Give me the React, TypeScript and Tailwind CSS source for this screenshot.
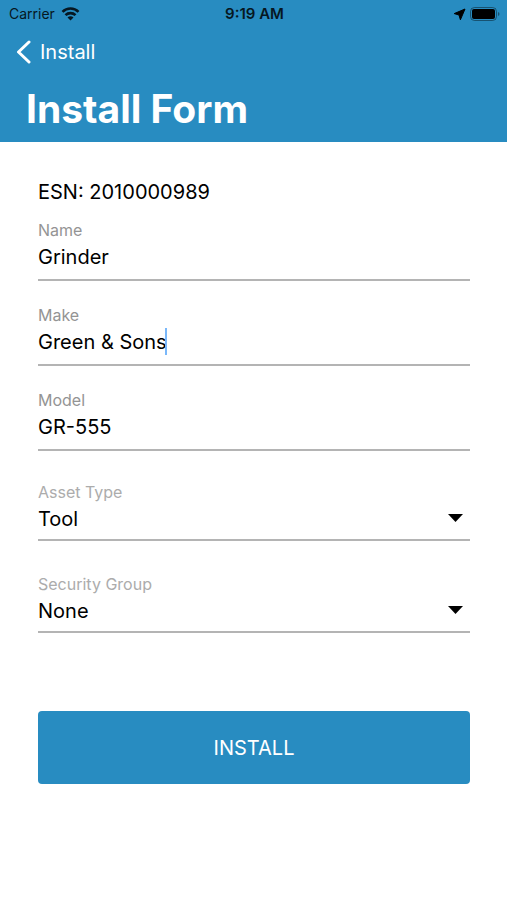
import { useState } from "react";

const ASSET_TYPES = ["Tool"];
const SECURITY_GROUPS = ["None"];

function StatusBar() {
  return (
    <div className="grid h-7 grid-cols-3 items-center pr-[7px] pl-[9px] text-sm text-[#061722]">
      <div className="flex items-center gap-1.5">
        <span>Carrier</span>
        <svg width="19" height="14" viewBox="0 0 18 14" fill="none" stroke="currentColor" strokeWidth="2.6">
          <path d="M1 4.800a11.3 11.3 0 0 1 16 0" />
          <path d="M4 8.200a7 7 0 0 1 10 0" />
          <path d="M9 13.500l-3-3.100a4.200 4.200 0 0 1 6 0z" fill="currentColor" stroke="none" />
        </svg>
      </div>
      <span className="text-center text-[15px] font-semibold">9:19 AM</span>
      <div className="flex items-center justify-end gap-1">
        <svg width="13" height="13" viewBox="0 0 13 13" fill="black" stroke="black" strokeLinejoin="round">
          <path d="M12 1 7.400 11.800 6 7 1.200 5.600z" />
        </svg>
        <svg width="30" height="14" viewBox="0 0 30 14">
          <rect x=".5" y=".5" width="26" height="13" rx="4" fill="none" stroke="currentColor" opacity=".5" />
          <rect x="2" y="2" width="23" height="10" rx="2" fill="black" />
          <path d="M28 5v4q1.500-.5 1.500-2T28 5" fill="currentColor" opacity=".5" />
        </svg>
      </div>
    </div>
  );
}

interface TextFieldProps {
  id: string;
  label: string;
  value: string;
  onChange: (value: string) => void;
  caret?: boolean;
}

function TextField({ id, label, value, onChange, caret }: TextFieldProps) {
  return (
    <div className="relative h-[62px] border-b-2 border-[#b4b4b4]">
      <label htmlFor={id} className="block text-base leading-[22px] text-[#949494]">
        {label}
      </label>
      <input
        id={id}
        value={value}
        onChange={(e) => onChange(e.target.value)}
        className="block h-8 w-full bg-transparent text-xl outline-none"
      />
      {/* text cursor, placed after the typed value */}
      {caret && (
        <span className="pointer-events-none absolute top-6 left-0 flex h-[27px] text-xl" aria-hidden="true">
          <span className="invisible whitespace-pre">{value}</span>
          <span className="-ml-0.5 w-0.5 bg-[#7ab8fa]" />
        </span>
      )}
    </div>
  );
}

interface SelectFieldProps {
  id: string;
  label: string;
  options: string[];
}

function SelectField({ id, label, options }: SelectFieldProps) {
  return (
    <div className="relative h-[60px] border-b-2 border-[#b4b4b4]">
      <label htmlFor={id} className="block text-base leading-[22px] text-[#acacac]">
        {label}
      </label>
      <select id={id} className="block h-8 w-full appearance-none bg-transparent text-xl outline-none">
        {options.map((o) => (
          <option key={o}>{o}</option>
        ))}
      </select>
      <svg
        className="pointer-events-none absolute top-[33px] right-[7px]"
        width="15"
        height="8"
        viewBox="0 0 15 8"
      >
        <path d="M0 0h15L7.500 8z" />
      </svg>
    </div>
  );
}

export default function App() {
  const [name, setName] = useState("Grinder");
  const [make, setMake] = useState("Green & Sons");
  const [model, setModel] = useState("GR-555");

  return (
    <div className="min-h-screen bg-white font-['Inter',sans-serif] text-black">
      <header className="bg-[#288cc1] pb-1.5">
        <StatusBar />
        <nav className="px-4 py-2">
          <button className="flex items-center gap-2 text-xl leading-8 text-white">
            <svg
              width="16"
              height="24"
              viewBox="0 0 16 24"
              fill="none"
              stroke="currentColor"
              strokeWidth="3"
              strokeLinecap="round"
              strokeLinejoin="round"
            >
              <path d="M13 2 2.500 12 13 22" />
            </svg>
            Install
          </button>
        </nav>
        <h1 className="px-[26px] pt-1.5 text-[39px] leading-[54px] font-bold text-white">Install Form</h1>
      </header>

      <form className="pt-9 pr-[37px] pl-[38px]" onSubmit={(e) => e.preventDefault()}>
        <p className="mb-[13px] text-xl leading-7">ESN: 2010000989</p>
        <div className="space-y-[23px]">
          <TextField id="name" label="Name" value={name} onChange={setName} />
          <TextField id="make" label="Make" value={make} onChange={setMake} caret />
          <TextField id="model" label="Model" value={model} onChange={setModel} />
        </div>
        <div className="mt-[30px] space-y-8">
          <SelectField id="asset-type" label="Asset Type" options={ASSET_TYPES} />
          <SelectField id="security-group" label="Security Group" options={SECURITY_GROUPS} />
        </div>
        <button type="submit" className="mt-[78px] h-[73px] w-full rounded bg-[#288cc1] text-xl text-white">
          INSTALL
        </button>
      </form>
    </div>
  );
}
